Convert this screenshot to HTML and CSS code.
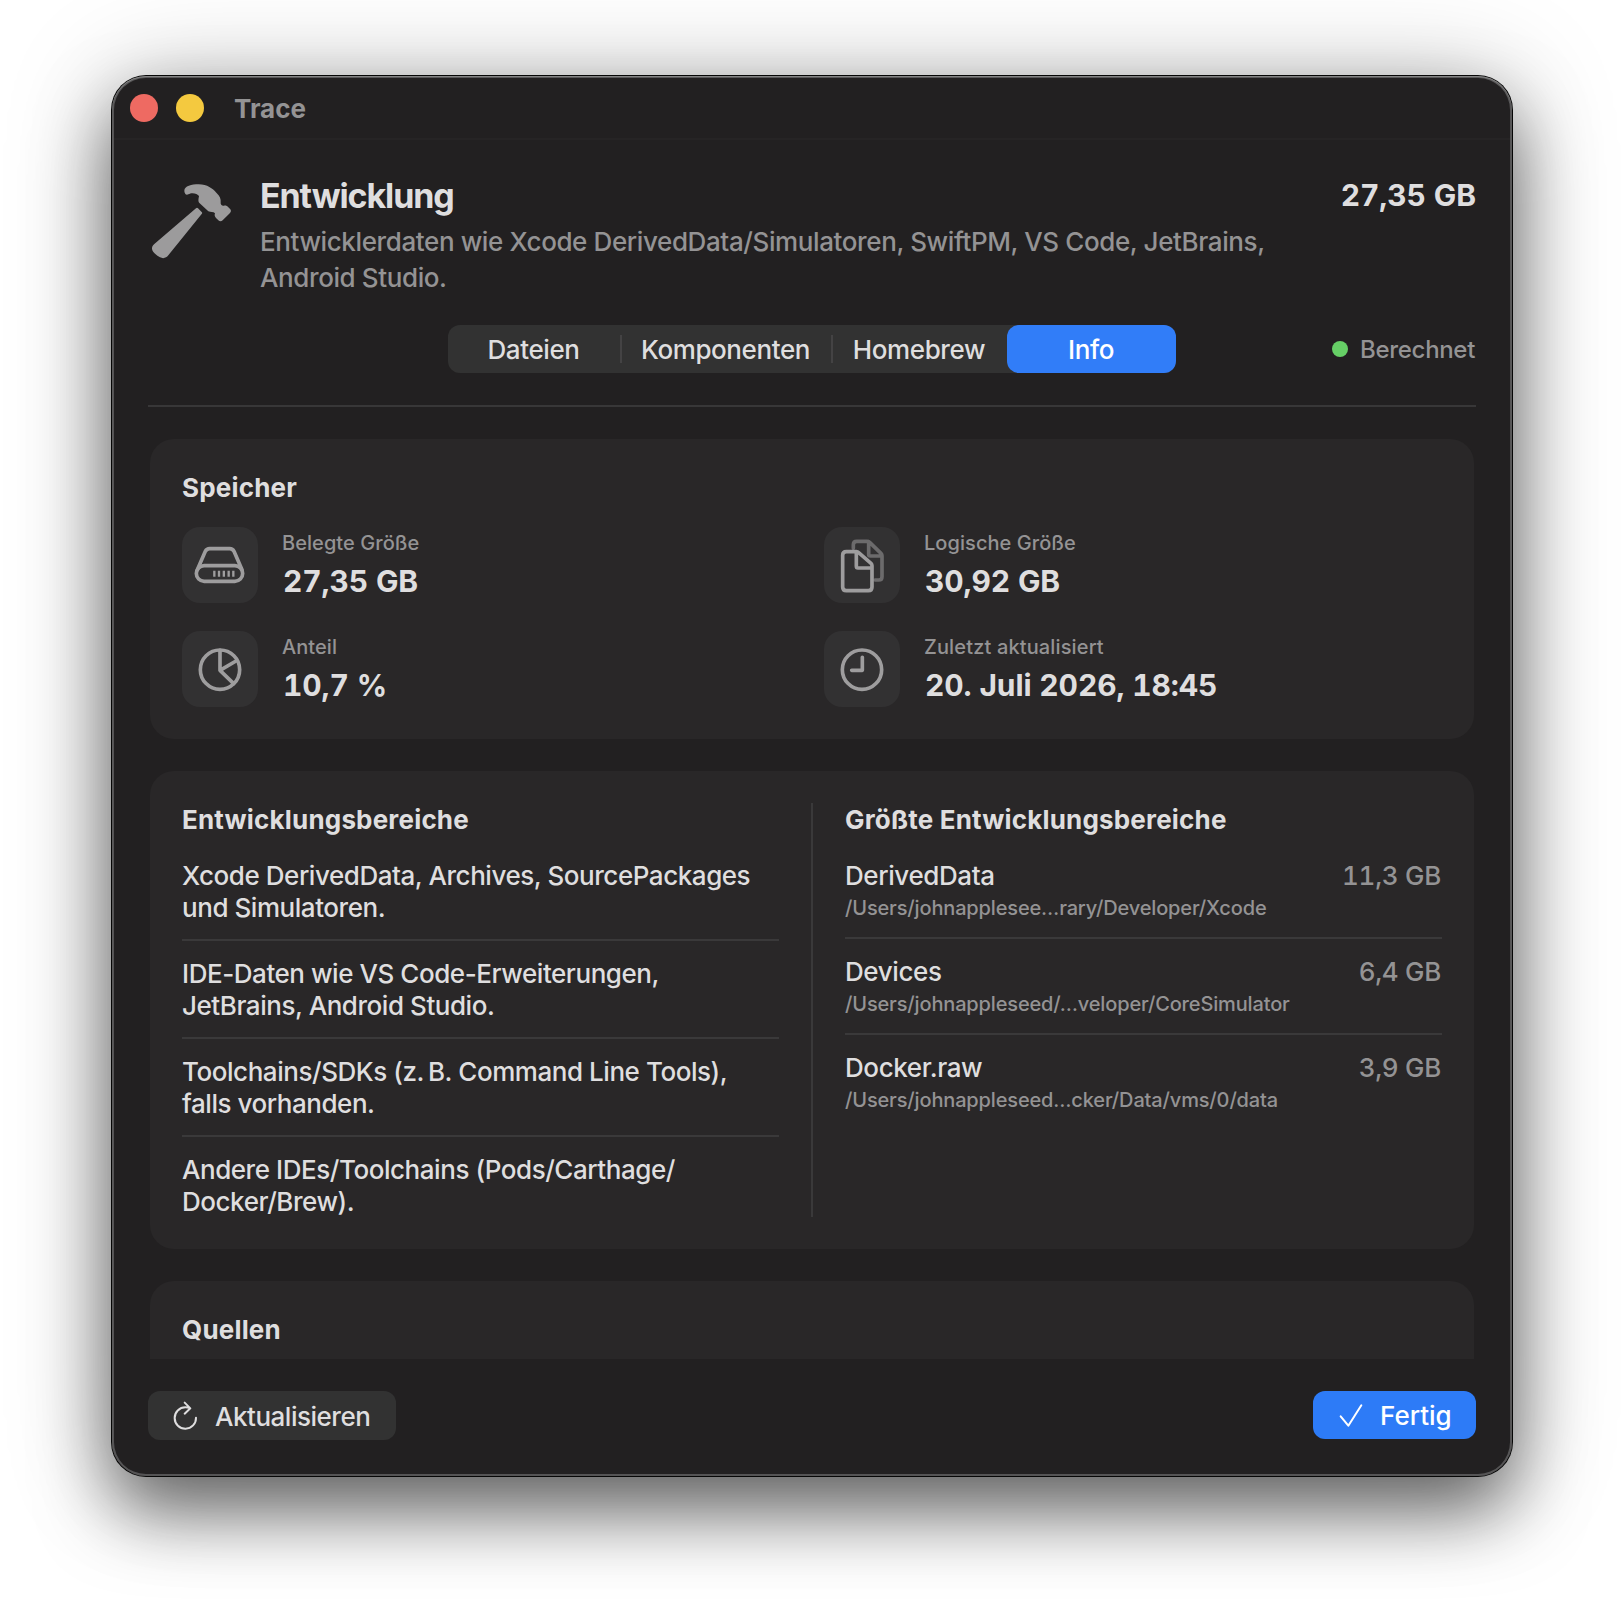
FILE: index.html
```html
<!DOCTYPE html>
<html lang="de">
<head>
<meta charset="utf-8">
<title>Trace</title>
<link rel="stylesheet" href="styles.css">
</head>
<body>
<main class="window">
  <header class="titlebar">
    <span class="light light-close"></span>
    <span class="light light-minimize"></span>
    <span class="window-title">Trace</span>
  </header>
  <div class="content">
    <section class="summary">
      <svg class="hammer" viewBox="150 366 246 234" aria-hidden="true">
        <path d="M253 392C253 378 275 373 296 373C322 373 338 386 349 398C360 408 363 417 362 427C361 435 366 438 372 437C377 436 382 438 385 442L391 448C394 452 393 456 390 459L368 481C364 485 359 485 355 481L348 474C344 470 343 465 345 460C340 455 332 457 325 454L299 430C293 424 296 415 297 408C292 400 275 396 265 403C258 407 253 400 253 392Z"/>
        <path d="M288 445Q291 442 294 445L305 456Q308 459 305 462L205 586C199 594 190 597 180 592C170 586 162 580 158 573C154 565 156 558 163 552Z"/>
      </svg>
      <div class="summary-text">
        <h1 class="summary-title">Entwicklung</h1>
        <p class="summary-description">Entwicklerdaten wie Xcode DerivedData/Simulatoren, SwiftPM, VS Code, JetBrains,<br>Android Studio.</p>
      </div>
      <strong class="summary-size">27,35 GB</strong>
    </section>

    <nav class="toolbar">
      <div class="segments">
        <button class="segment segment-files">Dateien</button>
        <button class="segment segment-components">Komponenten</button>
        <button class="segment segment-homebrew">Homebrew</button>
        <button class="segment segment-info">Info</button>
      </div>
      <div class="status"><span class="status-dot"></span><span class="status-label">Berechnet</span></div>
    </nav>
    <hr class="rule">

    <div class="scroll">
      <section class="card">
        <h2 class="card-title">Speicher</h2>
        <div class="stats">
          <div class="stat">
            <svg class="stat-icon" viewBox="0 0 228 228" aria-hidden="true">
              <rect x="43" y="116" width="139" height="47" rx="23.5"/>
              <path d="M46 128L70 73Q74 65 83 65H143Q152 65 156 73L180 128"/>
              <path class="ticks" d="M97 131v18M111 131v18M125.500 131v18M140 131v18M154 131v18"/>
            </svg>
            <div class="stat-text"><span class="stat-label">Belegte Größe</span><span class="stat-value">27,35 GB</span></div>
          </div>
          <div class="stat">
            <svg class="stat-icon" viewBox="0 0 228 228" aria-hidden="true">
              <path class="dim" d="M88 64V53Q88 43 98 43H130Q134 43 137 46L171 79Q174 82 174 86V149Q174 159 164 159H153M134 44V82Q134 87 139 87H173"/>
              <path d="M67 74H97Q101 74 104 77L141 109Q144 112 144 116V180Q144 191 133 191H67Q56 191 56 180V85Q56 74 67 74ZM97 75V118Q97 123 102 123H143"/>
            </svg>
            <div class="stat-text"><span class="stat-label">Logische Größe</span><span class="stat-value">30,92 GB</span></div>
          </div>
          <div class="stat">
            <svg class="stat-icon" viewBox="0 0 228 228" aria-hidden="true">
              <circle cx="114" cy="116" r="59"/>
              <path d="M114 58V118L162 90M114 118L155 158"/>
            </svg>
            <div class="stat-text"><span class="stat-label">Anteil</span><span class="stat-value">10,7 %</span></div>
          </div>
          <div class="stat">
            <svg class="stat-icon" viewBox="0 0 228 228" aria-hidden="true">
              <circle cx="114" cy="116" r="59"/>
              <path d="M115 79V118H83"/>
            </svg>
            <div class="stat-text"><span class="stat-label stat-label-wide">Zuletzt aktualisiert</span><span class="stat-value">20. Juli 2026, 18:45</span></div>
          </div>
        </div>
      </section>

      <section class="card card-split">
        <div class="column">
          <h2 class="card-title">Entwicklungsbereiche</h2>
          <ul class="list list-notes">
            <li class="list-item">Xcode DerivedData, Archives, SourcePackages<br>und Simulatoren.</li>
            <li class="list-item">IDE-Daten wie VS Code-Erweiterungen,<br>JetBrains, Android Studio.</li>
            <li class="list-item">Toolchains/SDKs (z.&#8239;B. Command Line Tools),<br>falls vorhanden.</li>
            <li class="list-item">Andere IDEs/Toolchains (Pods/Carthage/<br>Docker/Brew).</li>
          </ul>
        </div>
        <div class="column-rule"></div>
        <div class="column">
          <h2 class="card-title">Größte Entwicklungsbereiche</h2>
          <ul class="list">
            <li class="list-item area"><span class="area-name">DerivedData</span><span class="area-size">11,3 GB</span><span class="area-path">/Users/johnapplesee…rary/Developer/Xcode</span></li>
            <li class="list-item area"><span class="area-name">Devices</span><span class="area-size">6,4 GB</span><span class="area-path">/Users/johnappleseed/…veloper/CoreSimulator</span></li>
            <li class="list-item area"><span class="area-name">Docker.raw</span><span class="area-size">3,9 GB</span><span class="area-path">/Users/johnappleseed…cker/Data/vms/0/data</span></li>
          </ul>
        </div>
      </section>

      <section class="card">
        <h2 class="card-title">Quellen</h2>
      </section>
    </div>

    <footer class="actions">
      <button class="button button-refresh">
        <svg class="refresh" viewBox="246 420 78 90" aria-hidden="true"><path d="M318 473A32 32 0 1 1 286 442Q294 442 300 445M284 428L301 445L284 461"/></svg>
        <span>Aktualisieren</span>
      </button>
      <button class="button button-done">
        <svg class="check" viewBox="297 430 72 75" aria-hidden="true"><path d="M302 470L325 498L364 437"/></svg>
        <span>Fertig</span>
      </button>
    </footer>
  </div>
</main>
</body>
</html>
```
FILE: styles.css
```css
* { box-sizing: border-box; }

body {
  margin: 0;
  height: 1624px;
  padding: 76px 112px;
  overflow: hidden;
  background: #fff;
  color: #dfdedf;
  font: 450 26px/32px Inter, "Liberation Sans", sans-serif;
}

h1, h2, p, ul { margin: 0; padding: 0; }

button {
  border: 0;
  padding: 0;
  background: none;
  color: inherit;
  font: inherit;
}

.window {
  display: flex;
  flex-direction: column;
  width: 1400px;
  height: 1400px;
  border-radius: 34px;
  background: #222021;
  box-shadow:
    inset 0 1px 1px #8a8a8a,
    inset 0 0 0 2px #555455,
    0 0 0 1px #060606,
    0 36px 72px rgba(0, 0, 0, 0.54),
    0 4px 104px rgba(0, 0, 0, 0.25);
}

.titlebar {
  display: flex;
  align-items: center;
  height: 64px;
  margin: 0 2px;
  padding: 2px 16px 0;
  border-bottom: 2px solid #262425;
}

.light { width: 28px; height: 28px; border-radius: 50%; }
.light-close { background: #ee6a62; }
.light-minimize { margin-left: 18px; background: #f4c93f; }
.window-title { margin-left: 30px; padding-top: 1px; color: #949394; font-weight: 650; }

.content {
  display: flex;
  flex: 1;
  flex-direction: column;
  min-height: 0;
  padding: 35px 36px 36px;
}

.summary { display: flex; align-items: flex-start; height: 120px; }
.hammer { width: 82px; height: 78px; margin: 7px 28px 0 2px; fill: #9c9b9c; }
.summary-text { flex: 1; padding-top: 1px; }
.summary-title { margin-bottom: 8px; font-size: 34px; font-weight: 660; letter-spacing: -1.1px; line-height: 40px; }
.summary-description { color: #949394; letter-spacing: -0.39px; line-height: 36px; white-space: nowrap; }
.summary-size { margin-top: 2px; font-size: 30px; font-weight: 690; letter-spacing: -0.1px; line-height: 36px; }

.summary-size,
.stat-value,
.area-size { font-variant-numeric: tabular-nums; }

.toolbar {
  display: grid;
  grid-template-columns: 1fr 728px 1fr;
  align-items: center;
  margin-top: 30px;
}
.segments {
  display: flex;
  grid-column: 2;
  height: 48px;
  border-radius: 12px;
  background: #323232;
}
.segment { position: relative; height: 48px; padding: 2px 1px 0 0; letter-spacing: -0.4px; }
.segment-files { width: 172px; }
.segment-components { width: 212px; }
.segment-homebrew { width: 175px; }
.segment-info { width: 169px; border-radius: 12px; background: #317df8; color: #fff; }
.segment-components::before,
.segment-homebrew::before {
  content: "";
  position: absolute;
  top: 10px;
  left: 0;
  width: 2px;
  height: 28px;
  background: #444344;
}
.segment-homebrew::before { left: -1px; }
.status { display: flex; align-items: center; justify-content: flex-end; gap: 12px; padding-right: 1px; color: #949394; font-size: 24px; letter-spacing: -0.32px; }
.status-dot { width: 16px; height: 16px; border-radius: 50%; background: #66cf66; }
.status-label { padding-top: 1px; }

.rule { width: 100%; height: 2px; margin: 32px 0; border: 0; background: #383738; }

.scroll {
  display: flex;
  flex-direction: column;
  gap: 32px;
  height: 920px;
  padding: 0 2px;
  overflow: hidden;
}
.card { flex: none; padding: 32px; border-radius: 24px; background: #292728; }
.card-title { margin-bottom: 23px; padding-top: 1px; font-size: 26px; font-weight: 700; letter-spacing: 0.18px; line-height: 32px; }

.stats { display: grid; grid-template-columns: 642px 1fr; row-gap: 28px; }
.stat { display: flex; align-items: center; gap: 24px; }
.stat-icon {
  width: 76px;
  height: 76px;
  border-radius: 18px;
  background: #323132;
  fill: none;
  stroke: #9e9d9e;
  stroke-width: 11;
  stroke-linecap: round;
  stroke-linejoin: round;
}
.stat-icon .dim { stroke: #6c6b6c; }
.stat-icon .ticks { stroke-width: 7; stroke-linecap: butt; }
.stat-text { display: flex; flex-direction: column; gap: 8px; }
.stat-label { color: #949394; font-size: 20px; letter-spacing: 0.06px; line-height: 24px; }
.stat-label-wide { letter-spacing: 0.14px; }
.stat-value { padding-left: 1px; font-size: 30px; font-weight: 700; letter-spacing: -0.12px; line-height: 36px; }

.card-split { display: grid; grid-template-columns: 1fr 2px 1fr; column-gap: 32px; }
.card-split .card-title { margin-bottom: 24px; }
.column-rule { background: #3a393a; }
.list { margin-bottom: -1px; list-style: none; }
.list-notes { letter-spacing: -0.45px; }
.list-item { white-space: nowrap; }
.list-item + .list-item { margin-top: 15px; padding-top: 17px; border-top: 2px solid #3a393a; }
.area { display: grid; grid-template-columns: 1fr auto; row-gap: 2px; }
.area-name { letter-spacing: -0.4px; }
.area-size { padding-right: 1px; color: #949394; letter-spacing: -0.3px; }
.area-path { grid-column: 1 / -1; color: #949394; font-size: 20px; letter-spacing: -0.15px; line-height: 28px; }

.actions { display: flex; align-items: flex-start; justify-content: space-between; margin-top: 32px; }
.button { display: flex; align-items: center; gap: 17px; border-radius: 12px; }
.button span { padding-top: 2px; }
.button svg { fill: none; stroke: currentColor; stroke-width: 6; stroke-linecap: round; stroke-linejoin: round; }
.button-refresh { width: 248px; height: 49px; padding-left: 24px; background: #323232; letter-spacing: -0.48px; }
.button-done { width: 163px; height: 48px; padding-left: 26px; background: #2d7bf7; color: #fff; }
.refresh { width: 26px; height: 30px; margin-top: -1px; }
.check { width: 24px; height: 25px; }
```
